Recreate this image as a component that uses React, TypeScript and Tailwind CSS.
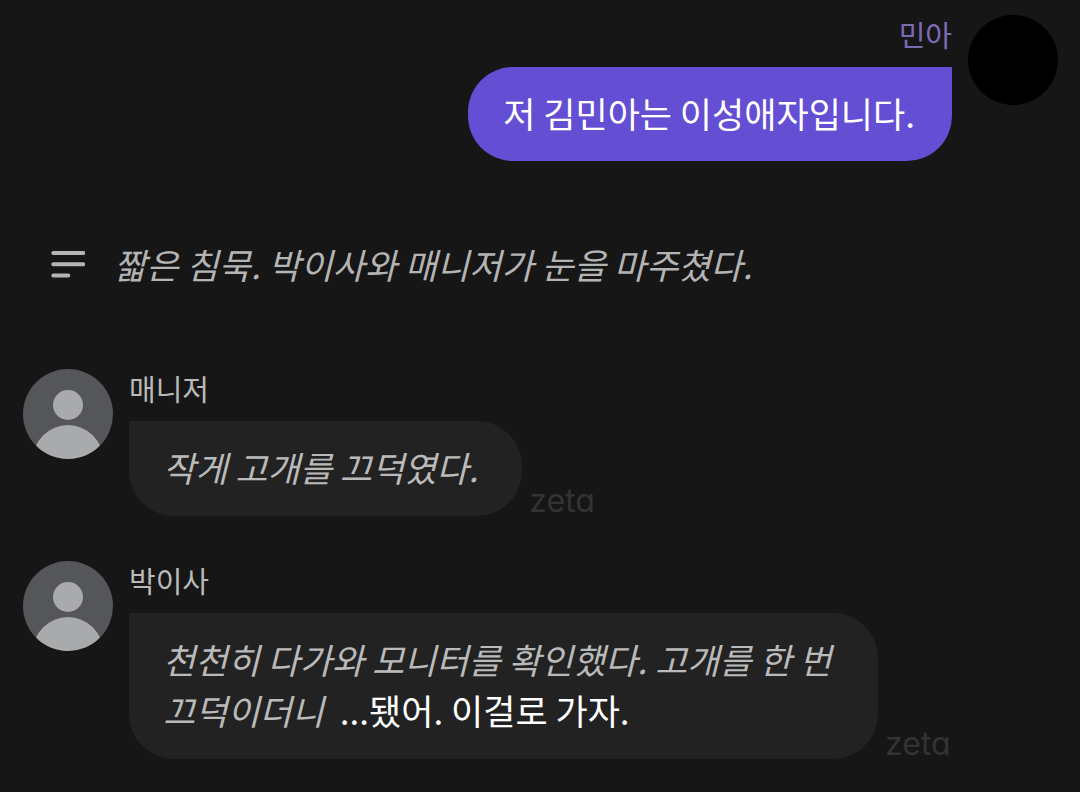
import type { ReactNode } from "react";

function PersonAvatar() {
  return (
    <svg viewBox="0 0 90 90" className="size-[90px] shrink-0" aria-hidden="true">
      <defs>
        <clipPath id="avatar-disc">
          <circle cx="45" cy="45" r="45" />
        </clipPath>
      </defs>
      <g clipPath="url(#avatar-disc)">
        <rect width="90" height="90" fill="#55565a" />
        <circle cx="45" cy="36" r="15" fill="#a9aaac" />
        <circle cx="45" cy="91" r="35" fill="#a9aaac" />
      </g>
    </svg>
  );
}

function NarrationIcon() {
  return (
    <svg
      viewBox="0 0 34 28"
      className="h-7 w-[34px] shrink-0"
      fill="none"
      stroke="#b4b4b4"
      strokeWidth="4"
      strokeLinecap="round"
      aria-hidden="true"
    >
      <path d="M2.3 3h30M2.3 14.2h30M2.3 25.4h15" />
    </svg>
  );
}

function ReceivedMessage({ name, children }: { name: string; children: ReactNode }) {
  return (
    <article className="flex items-start gap-4">
      <PersonAvatar />
      <div className="min-w-0 flex-1">
        <h2 className="h-[52px] text-[29px] leading-[38px] text-[#bababa]">{name}</h2>
        <div className="flex items-end gap-[7px]">
          <p className="max-w-[749px] rounded-[45px] rounded-tl-none bg-[#222222] pt-5 pr-11 pb-6 pl-[34px] text-[35px] leading-[51px]">
            {children}
          </p>
          <span className="font-['Inter',sans-serif] text-[32px] leading-[30px] text-[#333333] [font-feature-settings:'cv11']">
            zeta
          </span>
        </div>
      </div>
    </article>
  );
}

export default function App() {
  return (
    <main className="min-h-screen bg-[#161616] pt-[15px] pr-[22px] pb-8 pl-[23px] font-['Noto_Sans_CJK_KR',sans-serif] break-keep">
      <article className="flex items-start justify-end gap-4">
        <div className="flex flex-col items-end">
          <h2 className="h-[52px] text-[29px] leading-[38px] text-[#7b6bb7]">민아</h2>
          <p className="rounded-[45px] rounded-tr-none bg-[#644ed3] pt-5 pr-[37px] pb-[23px] pl-[35px] text-[35px] leading-[51px] text-white">
            저 김민아는 이성애자입니다.
          </p>
        </div>
        <div className="size-[90px] shrink-0 rounded-full bg-black" />
      </article>

      <div className="mt-[77px] flex items-center gap-[29px] pl-7">
        <NarrationIcon />
        <p className="text-[35px] leading-[51px] text-[#b4b4b4] italic">
          짧은 침묵. 박이사와 매니저가 눈을 마주쳤다.
        </p>
      </div>

      <section className="mt-20 flex flex-col gap-[45px]">
        <ReceivedMessage name="매니저">
          <em className="text-[#bababa]">작게 고개를 끄덕였다.</em>
        </ReceivedMessage>
        <ReceivedMessage name="박이사">
          <em className="text-[#bababa]">천천히 다가와 모니터를 확인했다. 고개를 한 번 끄덕이더니</em>
          <span className="ml-2 text-white"> ...됐어. 이걸로 가자.</span>
        </ReceivedMessage>
      </section>
    </main>
  );
}
